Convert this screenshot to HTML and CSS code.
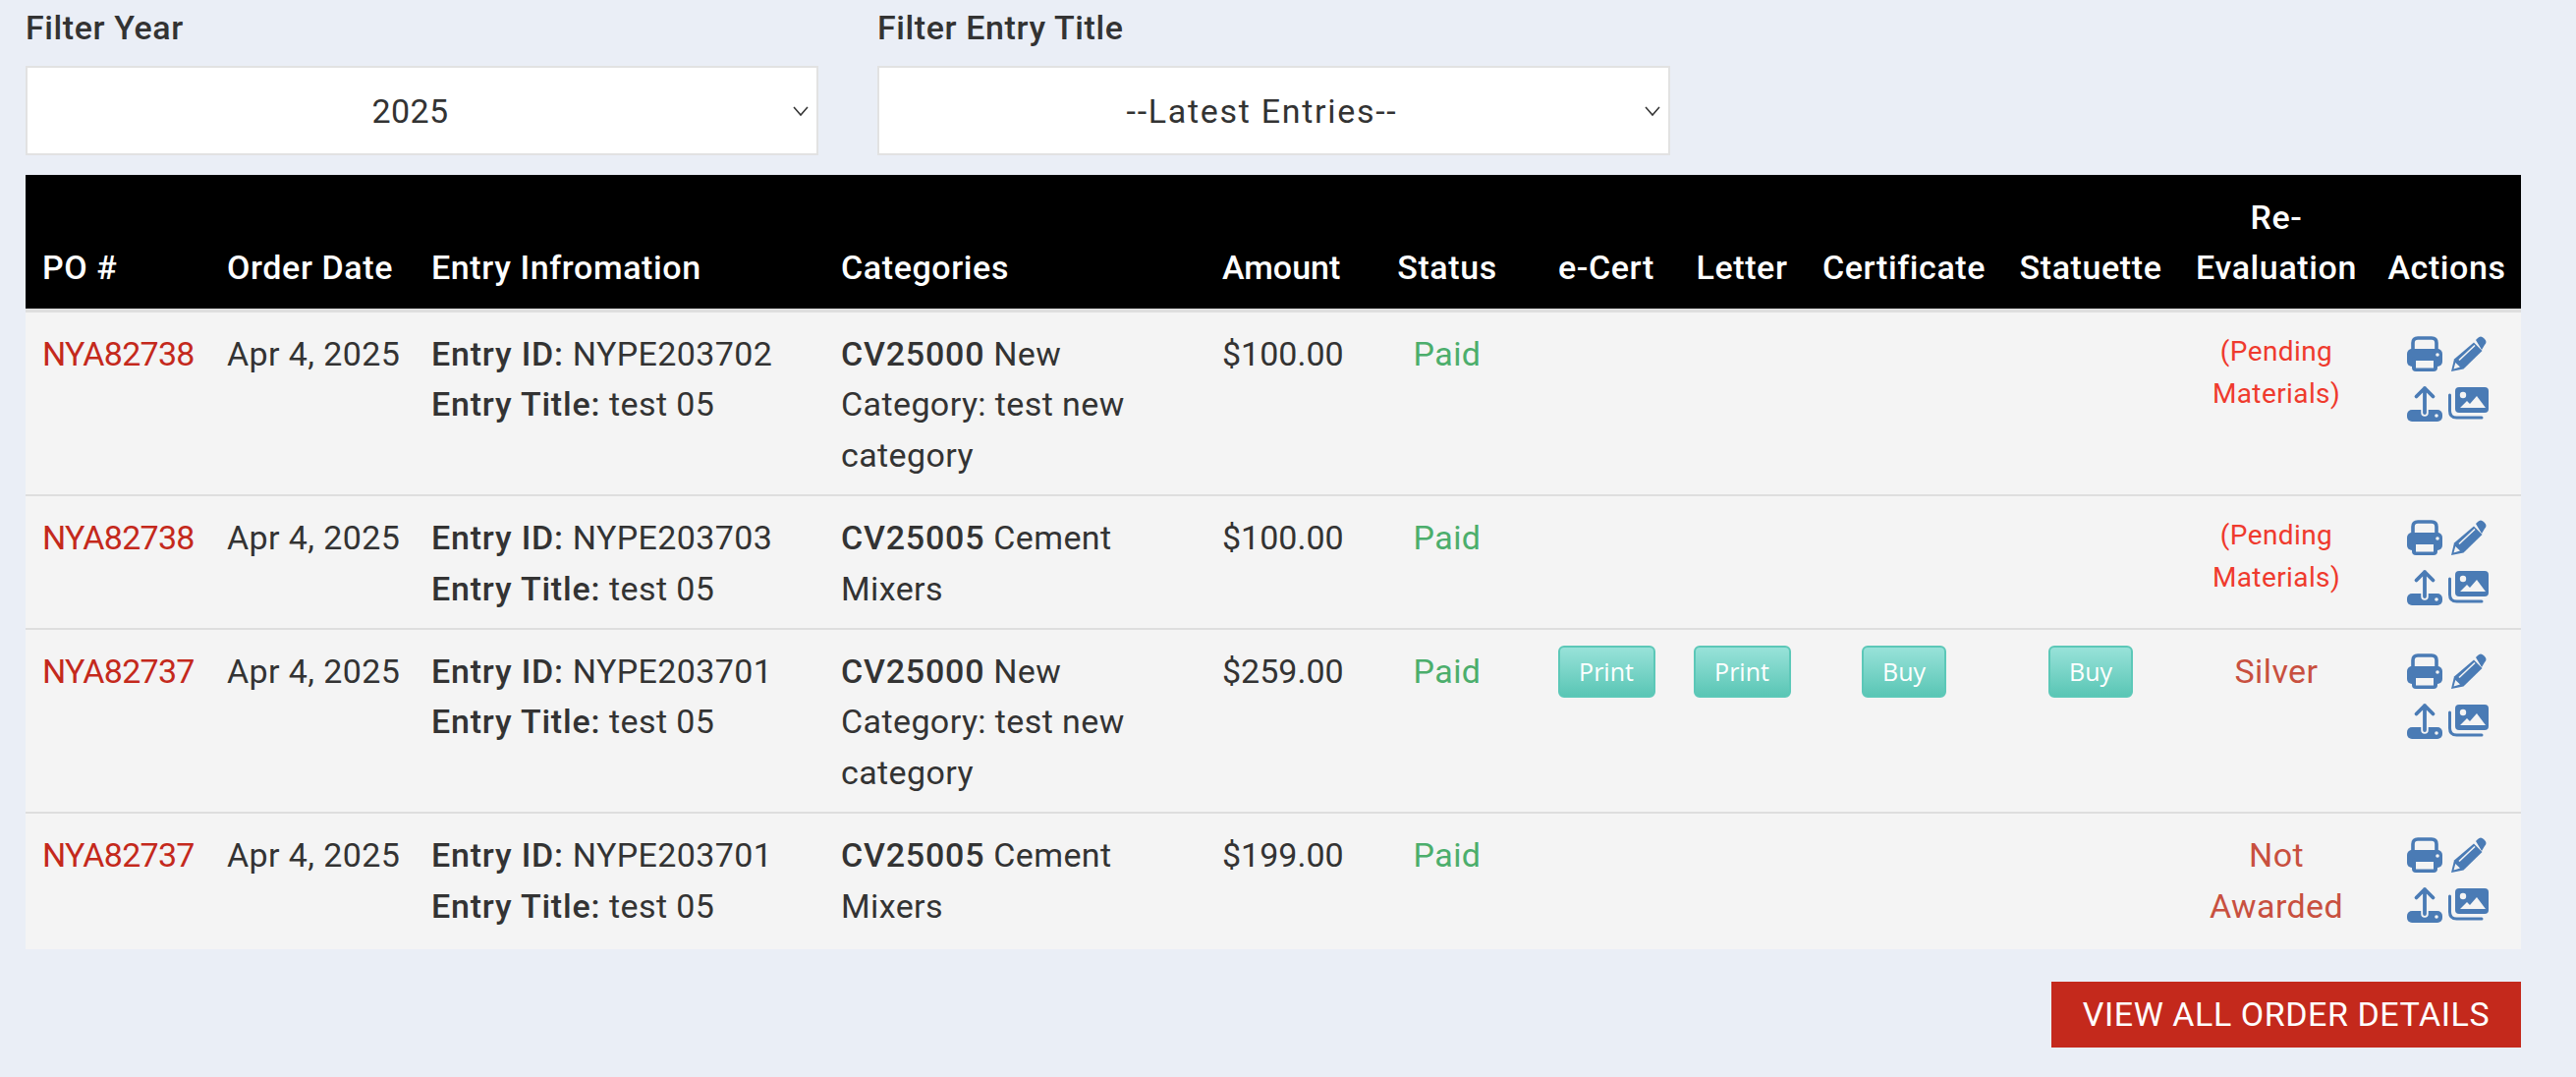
FILE: index.html
```html
<!DOCTYPE html>
<html>
<head>
    <title>Order Details</title>
    <link rel="stylesheet" href="styles.css">
</head>
<body>
    <svg class="icon-defs" xmlns="http://www.w3.org/2000/svg">
        <symbol id="i-print" viewBox="0 0 36 36">
            <path d="M6 14V7q0-5 5-5h14q5 0 5 5v7" fill="none" stroke="currentColor" stroke-width="3.6"/>
            <rect y="13" width="36" height="18" rx="5" fill="currentColor"/>
            <rect x="5" y="21" width="26" height="15" rx="4" fill="currentColor"/>
            <rect x="9" y="25" width="18" height="7.5" fill="#f4f4f4"/>
            <circle cx="31" cy="19" r="1.8" fill="#f4f4f4"/>
        </symbol>
        <symbol id="i-pencil" viewBox="0 0 36 36">
            <path d="M25 4l2-2q3-3 6 0l1 1q3 3 0 6l-3 5z" fill="currentColor"/>
            <path d="M23 6.5l8.5 8.5-19 18.5L0 36l3-12.5z" fill="currentColor"/>
            <path d="M8 24.500L24 9.500" stroke="#f4f4f4" stroke-width="1.600"/>
            <path d="M2.500 33.500l1.800-6.500 4.700 4.500z" fill="#f4f4f4"/>
        </symbol>
        <symbol id="i-upload" viewBox="0 0 36 37">
            <rect y="25" width="36" height="12" rx="5" fill="currentColor"/>
            <path d="M18 22v6" stroke="#f4f4f4" stroke-width="7.500" stroke-linecap="round"/>
            <path d="M18 28V3M9.500 11.500L18 3l8.500 8.500" fill="none" stroke="currentColor" stroke-width="3.800" stroke-linecap="round" stroke-linejoin="round"/>
            <circle cx="30" cy="31" r="1.800" fill="#f4f4f4"/>
        </symbol>
        <symbol id="i-images" viewBox="0 0 41 33">
            <path d="M1.500 8v16q0 7 7 7H34" fill="none" stroke="currentColor" stroke-width="3" stroke-linecap="round"/>
            <rect x="7" width="34" height="26" rx="4" fill="currentColor"/>
            <circle cx="15" cy="8" r="3.200" fill="#f4f4f4"/>
            <path d="M12 21l7-7 3 3 7-8 9 12z" fill="#f4f4f4"/>
        </symbol>
    </svg>

    <div class="page">
        <div class="filters">
            <div class="filter">
                <label class="filter-label" for="filter-year">Filter Year</label>
                <select id="filter-year" class="filter-select">
                    <option>2025</option>
                </select>
            </div>
            <div class="filter">
                <label class="filter-label" for="filter-title">Filter Entry Title</label>
                <select id="filter-title" class="filter-select filter-select-wide">
                    <option>--Latest Entries--</option>
                </select>
            </div>
        </div>

        <table class="orders">
            <colgroup>
                <col class="col-po">
                <col class="col-date">
                <col class="col-entry">
                <col class="col-cat">
                <col class="col-amount">
                <col class="col-status">
                <col class="col-ecert">
                <col class="col-letter">
                <col class="col-cert">
                <col class="col-statuette">
                <col class="col-reeval">
                <col class="col-actions">
            </colgroup>
            <thead>
                <tr>
                    <th>PO #</th>
                    <th>Order Date</th>
                    <th>Entry Infromation</th>
                    <th>Categories</th>
                    <th class="right">Amount</th>
                    <th class="center">Status</th>
                    <th class="center">e-Cert</th>
                    <th class="center">Letter</th>
                    <th class="center">Certificate</th>
                    <th class="center">Statuette</th>
                    <th class="center">Re-<br>Evaluation</th>
                    <th class="center">Actions</th>
                </tr>
            </thead>
            <tbody>
                <tr>
                    <td><a class="po-link">NYA82738</a></td>
                    <td class="nowrap">Apr 4, 2025</td>
                    <td><b>Entry ID:</b> NYPE203702<br><b>Entry Title:</b> test 05</td>
                    <td><b>CV25000</b> New Category: test new category</td>
                    <td class="right">$100.00</td>
                    <td class="center paid">Paid</td>
                    <td></td>
                    <td></td>
                    <td></td>
                    <td></td>
                    <td class="center pending">(Pending Materials)</td>
                    <td class="center">
                        <div class="actions">
                            <svg class="ic ic-square"><use href="#i-print"/></svg>
                            <svg class="ic ic-square"><use href="#i-pencil"/></svg>
                            <svg class="ic ic-upload"><use href="#i-upload"/></svg>
                            <svg class="ic ic-images"><use href="#i-images"/></svg>
                        </div>
                    </td>
                </tr>
                <tr>
                    <td><a class="po-link">NYA82738</a></td>
                    <td class="nowrap">Apr 4, 2025</td>
                    <td><b>Entry ID:</b> NYPE203703<br><b>Entry Title:</b> test 05</td>
                    <td><b>CV25005</b> Cement Mixers</td>
                    <td class="right">$100.00</td>
                    <td class="center paid">Paid</td>
                    <td></td>
                    <td></td>
                    <td></td>
                    <td></td>
                    <td class="center pending">(Pending Materials)</td>
                    <td class="center">
                        <div class="actions">
                            <svg class="ic ic-square"><use href="#i-print"/></svg>
                            <svg class="ic ic-square"><use href="#i-pencil"/></svg>
                            <svg class="ic ic-upload"><use href="#i-upload"/></svg>
                            <svg class="ic ic-images"><use href="#i-images"/></svg>
                        </div>
                    </td>
                </tr>
                <tr>
                    <td><a class="po-link">NYA82737</a></td>
                    <td class="nowrap">Apr 4, 2025</td>
                    <td><b>Entry ID:</b> NYPE203701<br><b>Entry Title:</b> test 05</td>
                    <td><b>CV25000</b> New Category: test new category</td>
                    <td class="right">$259.00</td>
                    <td class="center paid">Paid</td>
                    <td class="center"><a class="btn-teal btn-print">Print</a></td>
                    <td class="center"><a class="btn-teal btn-print">Print</a></td>
                    <td class="center"><a class="btn-teal btn-buy">Buy</a></td>
                    <td class="center"><a class="btn-teal btn-buy">Buy</a></td>
                    <td class="center award">Silver</td>
                    <td class="center">
                        <div class="actions">
                            <svg class="ic ic-square"><use href="#i-print"/></svg>
                            <svg class="ic ic-square"><use href="#i-pencil"/></svg>
                            <svg class="ic ic-upload"><use href="#i-upload"/></svg>
                            <svg class="ic ic-images"><use href="#i-images"/></svg>
                        </div>
                    </td>
                </tr>
                <tr>
                    <td><a class="po-link">NYA82737</a></td>
                    <td class="nowrap">Apr 4, 2025</td>
                    <td><b>Entry ID:</b> NYPE203701<br><b>Entry Title:</b> test 05</td>
                    <td><b>CV25005</b> Cement Mixers</td>
                    <td class="right">$199.00</td>
                    <td class="center paid">Paid</td>
                    <td></td>
                    <td></td>
                    <td></td>
                    <td></td>
                    <td class="center award">Not Awarded</td>
                    <td class="center">
                        <div class="actions">
                            <svg class="ic ic-square"><use href="#i-print"/></svg>
                            <svg class="ic ic-square"><use href="#i-pencil"/></svg>
                            <svg class="ic ic-upload"><use href="#i-upload"/></svg>
                            <svg class="ic ic-images"><use href="#i-images"/></svg>
                        </div>
                    </td>
                </tr>
            </tbody>
        </table>

        <div class="footer">
            <a class="btn-all">VIEW ALL ORDER DETAILS</a>
        </div>
    </div>
</body>
</html>
```

FILE: styles.css
```css
:root {
    --page-bg: #eaeef6;
    --row-bg: #f4f4f4;
    --line: #dedede;
    --text: #333333;
    --red: #c4291c;
    --blue: #4a7bb5;
}

body {
    margin: 0;
    background-color: var(--page-bg);
    font-family: Roboto, "Liberation Sans", sans-serif;
    font-size: 34px;
    line-height: 51px;
    letter-spacing: 0.4px;
    color: var(--text);
}

.icon-defs {
    position: absolute;
    width: 0;
    height: 0;
}

.page {
    padding: 3px 56px 0 26px;
}

.filters {
    display: flex;
    gap: 60px;
    margin-bottom: 20px;
}

.filter {
    width: 807px;
}

.filter-label {
    display: block;
    margin-bottom: 13px;
    font-weight: 500;
    letter-spacing: 0.6px;
}

.filter-select {
    display: block;
    width: 100%;
    height: 91px;
    padding: 2px 40px 0 16px;
    border: 2px solid #e2e2e2;
    border-radius: 0;
    background-color: #ffffff;
    background-image: url("data:image/svg+xml;charset=UTF-8,%3csvg xmlns='http://www.w3.org/2000/svg' viewBox='0 0 16 12' fill='none' stroke='%23333333' stroke-width='1.500'%3e%3cpolyline points='1 2 8 10 15 2'/%3e%3c/svg%3e");
    background-repeat: no-repeat;
    background-position: right 8px center;
    background-size: 16px 12px;
    font: inherit;
    letter-spacing: inherit;
    color: var(--text);
    text-align: center;
    text-align-last: center;
    appearance: none;
}

.filter-select-wide {
    letter-spacing: 1.7px;
}

.orders {
    width: 2540px;
    table-layout: fixed;
    border-collapse: collapse;
}

.col-po { width: 188px; }
.col-date { width: 208px; }
.col-entry { width: 417px; }
.col-cat { width: 388px; }
.col-amount { width: 156px; }
.col-status { width: 180px; }
.col-ecert { width: 144px; }
.col-letter { width: 132px; }
.col-cert { width: 198px; }
.col-statuette { width: 182px; }
.col-reeval { width: 196px; }
.col-actions { width: 151px; }

.orders th {
    padding: 18px 17px 16px;
    background-color: #000000;
    border-bottom: 4px solid var(--line);
    color: #ffffff;
    font-weight: 500;
    letter-spacing: 0.6px;
    text-align: left;
    vertical-align: bottom;
    white-space: nowrap;
}

.orders td {
    padding: 17px 17px 14px;
    background-color: var(--row-bg);
    border-bottom: 2px solid var(--line);
    line-height: 51.4px;
    vertical-align: top;
}

.orders tbody tr:last-child td {
    padding-bottom: 18px;
    border-bottom: 0;
}

.orders b {
    font-weight: 500;
    letter-spacing: 0.8px;
}

.orders .nowrap {
    padding-right: 0;
    white-space: nowrap;
}

.orders .right {
    padding-right: 19px;
    letter-spacing: 0;
    text-align: right;
}

.orders .center {
    padding-left: 4px;
    padding-right: 4px;
    text-align: center;
}

.po-link {
    color: var(--red);
    letter-spacing: -0.7px;
}

.paid {
    color: #4cae6c;
}

.orders .pending {
    padding-left: 30px;
    padding-right: 30px;
    padding-top: 18px;
    color: #ef3a2d;
    font-size: 28px;
    line-height: 43px;
}

.orders .award {
    padding-left: 30px;
    padding-right: 30px;
    color: #c8503f;
}

.btn-teal {
    display: block;
    box-sizing: border-box;
    height: 53px;
    margin: -1px auto 0;
    border: 2px solid #5cc8b8;
    border-radius: 6px;
    background: linear-gradient(#98e2d9, #5ac6b5);
    color: #ffffff;
    font-family: "Open Sans", sans-serif;
    font-size: 25px;
    font-weight: 400;
    line-height: 48px;
    letter-spacing: 0;
}

.btn-print {
    width: 99px;
}

.btn-buy {
    width: 86px;
}

.actions {
    display: grid;
    grid-template-columns: 40px 41px;
    column-gap: 4px;
    justify-content: center;
    justify-items: center;
    align-items: center;
    row-gap: 14px;
    margin-top: 7px;
    color: var(--blue);
}

.ic {
    display: block;
}

.ic-square {
    width: 36px;
    height: 36px;
}

.ic-upload {
    width: 36px;
    height: 37px;
}

.ic-images {
    width: 41px;
    height: 33px;
}

.footer {
    display: flex;
    justify-content: flex-end;
    margin-top: 33px;
}

.btn-all {
    box-sizing: border-box;
    width: 478px;
    height: 67px;
    background-color: var(--red);
    color: #ffffff;
    font-size: 34px;
    line-height: 67px;
    letter-spacing: 0.55px;
    text-align: center;
}
```
